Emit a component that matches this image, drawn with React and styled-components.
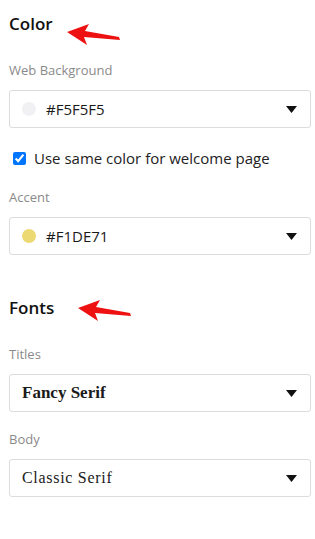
import styled, { createGlobalStyle } from 'styled-components';

const GlobalStyle = createGlobalStyle`
  body {
    margin: 0;
    background: #ffffff;
    font-family: 'Open Sans', 'Noto Sans', sans-serif;
  }
`

function Arrow({ top, left }) {
    return (
        <ArrowMark style={{ top, left }} width="60" height="30" viewBox="0 0 60 30">
            <path d="M0 10 L22 2 L18 9 L52 15 L53 18 L17 15 L20 23 Z" fill="#ee1111" />
        </ArrowMark>
    )
}

function Caret() {
    return (
        <svg width="11" height="7" viewBox="0 0 11 7">
            <path d="M0 0 H11 L5.5 7 Z" fill="#111" />
        </svg>
    )
}

function Select({ dot, font, children }) {
    return (
        <SelectBox>
            {dot && <Dot color={dot} />}
            <Value font={font}>{children}</Value>
            <Caret />
        </SelectBox>
    )
}

function App() {
    return (
        <Page>
            <GlobalStyle />
            <Section>
                <Heading>Color</Heading>
                <Label>Web Background</Label>
                <Select dot="#f1f1f3">#F5F5F5</Select>
                <Check>
                    <input type="checkbox" defaultChecked />
                    <span>Use same color for welcome page</span>
                </Check>
                <Label>Accent</Label>
                <Select dot="#ecd971">#F1DE71</Select>
            </Section>
            <Section>
                <Heading>Fonts</Heading>
                <Label>Titles</Label>
                <Select font="fancy">Fancy Serif</Select>
                <Label>Body</Label>
                <Select font="classic">Classic Serif</Select>
            </Section>
            <Arrow top={22} left={67} />
            <Arrow top={298} left={78} />
        </Page>
    )
}

export default App;

const Page = styled.div`
position: relative;
width: 315px;
height: 539px;
padding: 12px 4px 0 9px;
box-sizing: border-box;
`

const Section = styled.section`
display: flex;
flex-direction: column;
margin-bottom: 23px;
`

const Heading = styled.h2`
margin: 0 0 25px 0;
font-size: 17px;
font-weight: 600;
line-height: 24px;
color: #111;
`

const Label = styled.div`
font-size: 13px;
color: #8a8a8a;
line-height: 18px;
margin-bottom: 11px;
`

const SelectBox = styled.div`
display: flex;
align-items: center;
height: 38px;
box-sizing: border-box;
border: 1px solid #dcdcdc;
border-radius: 3px;
padding: 0 13px 0 12px;
margin-bottom: 18px;
`

const Dot = styled.span`
width: 14px;
height: 14px;
border-radius: 50%;
background: ${p => p.color};
margin-right: 10px;
flex-shrink: 0;
`

const Value = styled.span`
flex: 1;
color: #1a1a1a;
font-size: ${p => p.font === 'fancy' ? '17px' : p.font === 'classic' ? '16px' : '15px'};
font-weight: ${p => p.font === 'fancy' ? 700 : 400};
font-family: ${p => p.font ? "'Liberation Serif', 'DejaVu Serif', serif" : "'Open Sans', sans-serif"};
letter-spacing: ${p => p.font === 'classic' ? '0.7px' : '0'};
`

const Check = styled.label`
display: flex;
align-items: center;
font-size: 15px;
color: #222;
margin: 2px 0 20px 0;

input {
    margin: 0 8px 0 4px;
    width: 13px;
    height: 13px;
}
`

const ArrowMark = styled.svg`
position: absolute;
`
